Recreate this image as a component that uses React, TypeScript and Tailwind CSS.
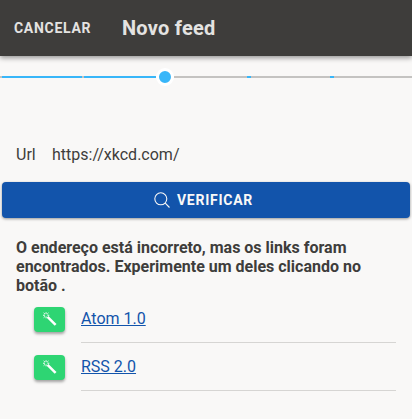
import React from "react";

function Wand() {
  return (
    <svg width="14" height="14" viewBox="0 0 16 16" fill="none">
      <path d="M6.2 4.6 L15.4 13.8 L13.4 15.8 L4.2 6.6 Z" fill="#fff" />
      <path
        d="M3.5 0.3v2.2M3.5 5v2.2M0 3.7h2.2M5 3.7h2.2M0.8 1l1.4 1.4M0.8 6.4l1.4-1.4M6.2 1L4.8 2.4"
        stroke="#fff"
        strokeWidth="1.1"
      />
    </svg>
  );
}

function Segment({ className }: { className: string }) {
  return <div className={className} />;
}

function FeedRow({ label }: { label: string }) {
  return (
    <div className="flex h-12 items-stretch pl-[34px] pr-4">
      <div className="flex w-[47px] shrink-0 items-center">
        <button className="flex h-[25px] w-[31px] items-center justify-center rounded-[4px] bg-[#2ed573] shadow-[0_2px_3px_rgba(0,0,0,0.35)]">
          <Wand />
        </button>
      </div>
      <div className="flex flex-1 items-center border-b border-[#d6d5d3]">
        <a className="text-base leading-6 text-[#1254ab] underline">{label}</a>
      </div>
    </div>
  );
}

export default function App() {
  return (
    <div className="h-[419px] w-[412px] overflow-hidden bg-[#f9f8f7] font-['Roboto',sans-serif] text-[#3e3d3b]">
      <header className="flex h-14 items-center bg-[#3e3d3b] pl-[14px] shadow-[0_2px_5px_rgba(0,0,0,0.4)]">
        <span className="w-[108px] text-sm font-bold tracking-[0.7px] text-[#e4e3e1]">CANCELAR</span>
        <span className="text-xl font-bold tracking-[0.25px] text-[#e4e3e1]">Novo feed</span>
      </header>

      <div className="mt-[11px] flex h-[20px] items-center">
        <Segment className="h-[2px] w-[2px] bg-[#c4c3c1]" />
        <Segment className="h-[2px] w-[80px] bg-[#38b6f9]" />
        <Segment className="h-[2px] w-[2px] bg-[#c4c3c1]" />
        <Segment className="h-[2px] w-[72px] bg-[#38b6f9]" />
        <div className="h-[18px] w-[18px] shrink-0 rounded-full border-[3px] border-white bg-[#38b6f9]" />
        <Segment className="h-[2px] w-[73px] bg-[#c4c3c1]" />
        <Segment className="h-[2px] w-[4px] bg-[#38b6f9]" />
        <Segment className="h-[2px] w-[79px] bg-[#c4c3c1]" />
        <Segment className="h-[2px] w-[4px] bg-[#38b6f9]" />
        <Segment className="h-[2px] flex-1 bg-[#c4c3c1]" />
      </div>

      <div className="mt-[54px] flex h-7 items-center pl-4 text-base">
        <span className="w-9">Url</span>
        <span>https://xkcd.com/</span>
      </div>

      <button className="mx-[2px] mt-[13px] flex h-9 w-[408px] items-center justify-center gap-[7px] rounded-[4px] bg-[#1254ab] pr-[5px] text-sm font-bold tracking-[0.75px] text-[#f9f8f7] shadow-[0_1px_3px_rgba(0,0,0,0.4)]">
        <svg width="16" height="16" viewBox="0 0 16 16" fill="none" stroke="#f9f8f7" strokeWidth="1.1">
          <circle cx="6.8" cy="6.8" r="6" />
          <path d="M11.2 11.2l4.3 4.3" />
        </svg>
        VERIFICAR
      </button>

      <p className="mx-4 mt-5 text-base font-bold leading-[19px]">
        O endereço está incorreto, mas os links foram encontrados. Experimente um deles clicando no botão .
      </p>

      <div>
        <FeedRow label="Atom 1.0" />
        <FeedRow label="RSS 2.0" />
      </div>
    </div>
  );
}
